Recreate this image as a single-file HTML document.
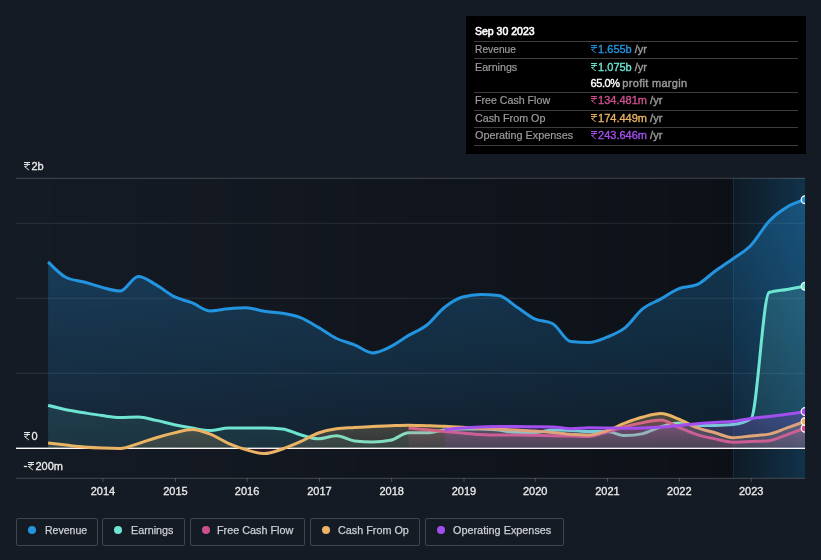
<!DOCTYPE html>
<html><head><meta charset="utf-8">
<style>
html,body{margin:0;padding:0;}
body{will-change:transform;width:821px;height:560px;overflow:hidden;background:#151b25;position:relative;font-family:"Liberation Sans",sans-serif;}
.tt{position:absolute;left:466px;top:16px;width:340px;height:138px;background:#000;}
.sep{position:absolute;left:8px;width:324px;height:1px;background:#3d3d3d;}
.t{position:absolute;font-size:11px;line-height:13px;white-space:nowrap;transform-origin:0 0;}
.lab{color:#9d9d9d;-webkit-text-stroke:0.2px #9d9d9d;}
.val{font-weight:normal;-webkit-text-stroke:0.35px currentColor;}
.yr{color:#9b9b9b;font-weight:normal;-webkit-text-stroke:0.4px #9b9b9b;}
.lg{position:absolute;top:518px;height:28px;border:1px solid #41464e;border-radius:2px;box-sizing:border-box;}
.lg .dot{position:absolute;left:11px;top:7px;width:8px;height:8px;border-radius:50%;}
.lg .tx{transform-origin:0 0;position:absolute;left:27.5px;top:5px;font-size:11px;line-height:13px;color:#cdd0d4;white-space:nowrap;-webkit-text-stroke:0.25px #cdd0d4;}
</style></head><body>
<svg width="821" height="560" viewBox="0 0 821 560" style="position:absolute;left:0;top:0">
<defs>
<linearGradient id="plotbg" x1="48" x2="805" y1="0" y2="0" gradientUnits="userSpaceOnUse">
 <stop offset="0" stop-color="#000" stop-opacity="0"/>
 <stop offset="0.9" stop-color="#000" stop-opacity="0.36"/>
 <stop offset="1" stop-color="#000" stop-opacity="0.4"/>
</linearGradient>
<linearGradient id="hl" x1="733" x2="805" y1="0" y2="0" gradientUnits="userSpaceOnUse">
 <stop offset="0" stop-color="#2394df" stop-opacity="0.07"/>
 <stop offset="1" stop-color="#2394df" stop-opacity="0.26"/>
</linearGradient>
<clipPath id="clip"><rect x="16" y="170" width="789" height="308.3"/></clipPath>
<clipPath id="pos"><rect x="16" y="170" width="789" height="278.3"/></clipPath>
<clipPath id="neg"><rect x="16" y="448.3" width="789" height="30.0"/></clipPath>
</defs>
<rect x="48" y="178" width="757" height="300" fill="url(#plotbg)"/>
<rect x="733" y="178" width="72" height="300" fill="url(#hl)"/>
<rect x="733" y="178" width="1" height="300" fill="#2394df" fill-opacity="0.16"/>
<rect x="16" y="177.8" width="789" height="1" fill="#ffffff" fill-opacity="0.2"/><rect x="16" y="222.8" width="789" height="1" fill="#ffffff" fill-opacity="0.1"/><rect x="16" y="297.8" width="789" height="1" fill="#ffffff" fill-opacity="0.1"/><rect x="16" y="372.8" width="789" height="1" fill="#ffffff" fill-opacity="0.1"/><rect x="16" y="477.8" width="789" height="1" fill="#ffffff" fill-opacity="0.2"/><rect x="102.4" y="478" width="1" height="4" fill="#ffffff" fill-opacity="0.2"/><rect x="174.9" y="478" width="1" height="4" fill="#ffffff" fill-opacity="0.2"/><rect x="246.6" y="478" width="1" height="4" fill="#ffffff" fill-opacity="0.2"/><rect x="318.9" y="478" width="1" height="4" fill="#ffffff" fill-opacity="0.2"/><rect x="391.2" y="478" width="1" height="4" fill="#ffffff" fill-opacity="0.2"/><rect x="463.5" y="478" width="1" height="4" fill="#ffffff" fill-opacity="0.2"/><rect x="534.7" y="478" width="1" height="4" fill="#ffffff" fill-opacity="0.2"/><rect x="607.0" y="478" width="1" height="4" fill="#ffffff" fill-opacity="0.2"/><rect x="678.8" y="478" width="1" height="4" fill="#ffffff" fill-opacity="0.2"/><rect x="750.7" y="478" width="1" height="4" fill="#ffffff" fill-opacity="0.2"/><rect x="16" y="447.6" width="789" height="1.4" fill="#ffffff"/><g clip-path="url(#clip)"><linearGradient id="g_rev" x1="0" x2="0" y1="0" y2="1"><stop offset="0" stop-color="#2394df" stop-opacity="0.34"/><stop offset="1" stop-color="#2394df" stop-opacity="0.09"/></linearGradient><path d="M48.10,261.90C54.11,268.20 60.12,274.50 66.12,277.50C72.13,280.50 78.14,280.35 84.15,282.00C90.16,283.65 96.16,285.90 102.17,287.40C108.18,288.90 114.19,291.00 120.20,291.00C126.20,291.00 132.21,276.40 138.22,276.40C144.23,276.40 150.24,281.52 156.24,284.90C162.25,288.28 168.26,293.70 174.27,296.70C180.28,299.70 186.28,300.52 192.29,302.90C198.30,305.28 204.31,311.00 210.32,311.00C216.32,311.00 222.33,309.33 228.34,308.80C234.35,308.27 240.36,307.80 246.36,307.80C252.37,307.80 258.38,310.38 264.39,311.30C270.40,312.22 276.40,312.25 282.41,313.30C288.42,314.35 294.43,315.25 300.44,317.60C306.44,319.95 312.45,323.92 318.46,327.40C324.47,330.88 330.48,335.60 336.48,338.50C342.49,341.40 348.50,342.40 354.51,344.80C360.52,347.20 366.52,352.90 372.53,352.90C378.54,352.90 384.55,349.62 390.56,346.70C396.56,343.78 402.57,338.97 408.58,335.40C414.59,331.83 420.60,330.00 426.60,325.30C432.61,320.60 438.62,311.92 444.63,307.20C450.64,302.48 456.64,298.73 462.65,297.00C468.66,295.27 474.67,294.40 480.68,294.40C486.68,294.40 492.69,294.77 498.70,295.50C504.71,296.23 510.72,303.00 516.72,306.90C522.73,310.80 528.74,316.10 534.75,318.90C540.76,321.70 546.76,320.50 552.77,323.70C558.78,326.90 564.79,340.90 570.80,341.50C576.80,342.10 582.81,342.40 588.82,342.40C594.83,342.40 600.84,339.62 606.84,337.20C612.85,334.78 618.86,332.65 624.87,327.90C630.88,323.15 636.88,313.53 642.89,308.70C648.90,303.87 654.91,302.25 660.92,298.90C666.92,295.55 672.93,290.97 678.94,288.60C684.95,286.23 690.96,287.30 696.96,284.70C702.97,282.10 708.98,275.52 714.99,271.20C721.00,266.88 727.00,263.13 733.01,258.80C739.02,254.47 745.03,251.45 751.04,245.20C757.04,238.95 763.05,227.67 769.06,221.30C775.07,214.93 781.08,210.60 787.08,207.00C793.09,203.40 799.10,201.55 805.11,199.70L805.11,448.3L48.10,448.3Z" fill="url(#g_rev)" clip-path="url(#pos)"/><path d="M48.10,261.90C54.11,268.20 60.12,274.50 66.12,277.50C72.13,280.50 78.14,280.35 84.15,282.00C90.16,283.65 96.16,285.90 102.17,287.40C108.18,288.90 114.19,291.00 120.20,291.00C126.20,291.00 132.21,276.40 138.22,276.40C144.23,276.40 150.24,281.52 156.24,284.90C162.25,288.28 168.26,293.70 174.27,296.70C180.28,299.70 186.28,300.52 192.29,302.90C198.30,305.28 204.31,311.00 210.32,311.00C216.32,311.00 222.33,309.33 228.34,308.80C234.35,308.27 240.36,307.80 246.36,307.80C252.37,307.80 258.38,310.38 264.39,311.30C270.40,312.22 276.40,312.25 282.41,313.30C288.42,314.35 294.43,315.25 300.44,317.60C306.44,319.95 312.45,323.92 318.46,327.40C324.47,330.88 330.48,335.60 336.48,338.50C342.49,341.40 348.50,342.40 354.51,344.80C360.52,347.20 366.52,352.90 372.53,352.90C378.54,352.90 384.55,349.62 390.56,346.70C396.56,343.78 402.57,338.97 408.58,335.40C414.59,331.83 420.60,330.00 426.60,325.30C432.61,320.60 438.62,311.92 444.63,307.20C450.64,302.48 456.64,298.73 462.65,297.00C468.66,295.27 474.67,294.40 480.68,294.40C486.68,294.40 492.69,294.77 498.70,295.50C504.71,296.23 510.72,303.00 516.72,306.90C522.73,310.80 528.74,316.10 534.75,318.90C540.76,321.70 546.76,320.50 552.77,323.70C558.78,326.90 564.79,340.90 570.80,341.50C576.80,342.10 582.81,342.40 588.82,342.40C594.83,342.40 600.84,339.62 606.84,337.20C612.85,334.78 618.86,332.65 624.87,327.90C630.88,323.15 636.88,313.53 642.89,308.70C648.90,303.87 654.91,302.25 660.92,298.90C666.92,295.55 672.93,290.97 678.94,288.60C684.95,286.23 690.96,287.30 696.96,284.70C702.97,282.10 708.98,275.52 714.99,271.20C721.00,266.88 727.00,263.13 733.01,258.80C739.02,254.47 745.03,251.45 751.04,245.20C757.04,238.95 763.05,227.67 769.06,221.30C775.07,214.93 781.08,210.60 787.08,207.00C793.09,203.40 799.10,201.55 805.11,199.70" fill="none" stroke="#2394df" stroke-width="3" stroke-linejoin="round" stroke-linecap="butt"/><linearGradient id="g_earn" x1="0" x2="0" y1="0" y2="1"><stop offset="0" stop-color="#6ee4d2" stop-opacity="0.16"/><stop offset="1" stop-color="#6ee4d2" stop-opacity="0.08"/></linearGradient><path d="M48.10,405.40C54.11,406.93 60.12,408.47 66.12,409.70C72.13,410.93 78.14,411.82 84.15,412.80C90.16,413.78 96.16,414.82 102.17,415.60C108.18,416.38 114.19,417.50 120.20,417.50C126.20,417.50 132.21,417.00 138.22,417.00C144.23,417.00 150.24,419.12 156.24,420.40C162.25,421.68 168.26,423.42 174.27,424.70C180.28,425.98 186.28,427.13 192.29,428.10C198.30,429.07 204.31,430.50 210.32,430.50C216.32,430.50 222.33,428.23 228.34,428.10C234.35,427.97 240.36,427.90 246.36,427.90C252.37,427.90 258.38,427.90 264.39,427.90C270.40,427.90 276.40,428.23 282.41,428.90C288.42,429.57 294.43,433.15 300.44,434.80C306.44,436.45 312.45,438.80 318.46,438.80C324.47,438.80 330.48,435.80 336.48,435.80C342.49,435.80 348.50,440.17 354.51,440.90C360.52,441.63 366.52,442.00 372.53,442.00C378.54,442.00 384.55,441.43 390.56,440.30C396.56,439.17 402.57,432.80 408.58,432.80C414.59,432.80 420.60,432.80 426.60,432.80C432.61,432.80 438.62,430.63 444.63,430.00C450.64,429.37 456.64,429.00 462.65,429.00C468.66,429.00 474.67,429.00 480.68,429.00C486.68,429.00 492.69,429.42 498.70,430.00C504.71,430.58 510.72,432.50 516.72,432.50C522.73,432.50 528.74,432.50 534.75,432.50C540.76,432.50 546.76,430.00 552.77,430.00C558.78,430.00 564.79,430.25 570.80,430.50C576.80,430.75 582.81,431.50 588.82,431.50C594.83,431.50 600.84,431.50 606.84,431.50C612.85,431.50 618.86,435.60 624.87,435.60C630.88,435.60 636.88,434.93 642.89,433.60C648.90,432.27 654.91,428.57 660.92,426.80C666.92,425.03 672.93,423.00 678.94,423.00C684.95,423.00 690.96,425.60 696.96,425.60C702.97,425.60 708.98,425.53 714.99,425.40C721.00,425.27 727.00,425.10 733.01,424.50C739.02,423.90 745.03,422.60 751.04,418.80C757.04,415.00 763.05,294.57 769.06,292.50C775.07,290.43 781.08,290.43 787.08,289.40C793.09,288.37 799.10,287.33 805.11,286.30L805.11,448.3L48.10,448.3Z" fill="url(#g_earn)" clip-path="url(#pos)"/><path d="M48.10,405.40C54.11,406.93 60.12,408.47 66.12,409.70C72.13,410.93 78.14,411.82 84.15,412.80C90.16,413.78 96.16,414.82 102.17,415.60C108.18,416.38 114.19,417.50 120.20,417.50C126.20,417.50 132.21,417.00 138.22,417.00C144.23,417.00 150.24,419.12 156.24,420.40C162.25,421.68 168.26,423.42 174.27,424.70C180.28,425.98 186.28,427.13 192.29,428.10C198.30,429.07 204.31,430.50 210.32,430.50C216.32,430.50 222.33,428.23 228.34,428.10C234.35,427.97 240.36,427.90 246.36,427.90C252.37,427.90 258.38,427.90 264.39,427.90C270.40,427.90 276.40,428.23 282.41,428.90C288.42,429.57 294.43,433.15 300.44,434.80C306.44,436.45 312.45,438.80 318.46,438.80C324.47,438.80 330.48,435.80 336.48,435.80C342.49,435.80 348.50,440.17 354.51,440.90C360.52,441.63 366.52,442.00 372.53,442.00C378.54,442.00 384.55,441.43 390.56,440.30C396.56,439.17 402.57,432.80 408.58,432.80C414.59,432.80 420.60,432.80 426.60,432.80C432.61,432.80 438.62,430.63 444.63,430.00C450.64,429.37 456.64,429.00 462.65,429.00C468.66,429.00 474.67,429.00 480.68,429.00C486.68,429.00 492.69,429.42 498.70,430.00C504.71,430.58 510.72,432.50 516.72,432.50C522.73,432.50 528.74,432.50 534.75,432.50C540.76,432.50 546.76,430.00 552.77,430.00C558.78,430.00 564.79,430.25 570.80,430.50C576.80,430.75 582.81,431.50 588.82,431.50C594.83,431.50 600.84,431.50 606.84,431.50C612.85,431.50 618.86,435.60 624.87,435.60C630.88,435.60 636.88,434.93 642.89,433.60C648.90,432.27 654.91,428.57 660.92,426.80C666.92,425.03 672.93,423.00 678.94,423.00C684.95,423.00 690.96,425.60 696.96,425.60C702.97,425.60 708.98,425.53 714.99,425.40C721.00,425.27 727.00,425.10 733.01,424.50C739.02,423.90 745.03,422.60 751.04,418.80C757.04,415.00 763.05,294.57 769.06,292.50C775.07,290.43 781.08,290.43 787.08,289.40C793.09,288.37 799.10,287.33 805.11,286.30" fill="none" stroke="#6ee4d2" stroke-width="3" stroke-linejoin="round" stroke-linecap="butt"/><linearGradient id="g_fcf" x1="0" x2="0" y1="0" y2="1"><stop offset="0" stop-color="#cc4f8e" stop-opacity="0.25"/><stop offset="1" stop-color="#cc4f8e" stop-opacity="0.09"/></linearGradient><path d="M408.58,427.90C414.59,428.50 420.60,429.10 426.60,429.70C432.61,430.30 438.62,430.93 444.63,431.50C450.64,432.07 456.64,432.60 462.65,433.10C468.66,433.60 474.67,434.18 480.68,434.50C486.68,434.82 492.69,435.00 498.70,435.00C504.71,435.00 510.72,435.00 516.72,435.00C522.73,435.00 528.74,435.18 534.75,435.30C540.76,435.42 546.76,435.57 552.77,435.70C558.78,435.83 564.79,435.97 570.80,436.10C576.80,436.23 582.81,436.50 588.82,436.50C594.83,436.50 600.84,433.63 606.84,432.00C612.85,430.37 618.86,428.27 624.87,426.70C630.88,425.13 636.88,423.73 642.89,422.60C648.90,421.47 654.91,419.90 660.92,419.90C666.92,419.90 672.93,425.05 678.94,427.50C684.95,429.95 690.96,432.70 696.96,434.60C702.97,436.50 708.98,437.63 714.99,438.90C721.00,440.17 727.00,442.20 733.01,442.20C739.02,442.20 745.03,441.75 751.04,441.50C757.04,441.25 763.05,441.23 769.06,440.70C775.07,440.17 781.08,436.68 787.08,434.60C793.09,432.52 799.10,430.36 805.11,428.20L805.11,448.3L408.58,448.3Z" fill="url(#g_fcf)" clip-path="url(#pos)"/><path d="M408.58,427.90C414.59,428.50 420.60,429.10 426.60,429.70C432.61,430.30 438.62,430.93 444.63,431.50C450.64,432.07 456.64,432.60 462.65,433.10C468.66,433.60 474.67,434.18 480.68,434.50C486.68,434.82 492.69,435.00 498.70,435.00C504.71,435.00 510.72,435.00 516.72,435.00C522.73,435.00 528.74,435.18 534.75,435.30C540.76,435.42 546.76,435.57 552.77,435.70C558.78,435.83 564.79,435.97 570.80,436.10C576.80,436.23 582.81,436.50 588.82,436.50C594.83,436.50 600.84,433.63 606.84,432.00C612.85,430.37 618.86,428.27 624.87,426.70C630.88,425.13 636.88,423.73 642.89,422.60C648.90,421.47 654.91,419.90 660.92,419.90C666.92,419.90 672.93,425.05 678.94,427.50C684.95,429.95 690.96,432.70 696.96,434.60C702.97,436.50 708.98,437.63 714.99,438.90C721.00,440.17 727.00,442.20 733.01,442.20C739.02,442.20 745.03,441.75 751.04,441.50C757.04,441.25 763.05,441.23 769.06,440.70C775.07,440.17 781.08,436.68 787.08,434.60C793.09,432.52 799.10,430.36 805.11,428.20" fill="none" stroke="#cc4f8e" stroke-width="3" stroke-linejoin="round" stroke-linecap="butt"/><linearGradient id="g_cfo" x1="0" x2="0" y1="0" y2="1"><stop offset="0" stop-color="#ebb464" stop-opacity="0.28"/><stop offset="1" stop-color="#ebb464" stop-opacity="0.1"/></linearGradient><path d="M48.10,443.10C54.11,443.78 60.12,444.45 66.12,445.10C72.13,445.75 78.14,446.50 84.15,447.00C90.16,447.50 96.16,447.85 102.17,448.10C108.18,448.35 114.19,448.50 120.20,448.50C126.20,448.50 132.21,445.40 138.22,443.60C144.23,441.80 150.24,439.48 156.24,437.70C162.25,435.92 168.26,434.27 174.27,432.90C180.28,431.53 186.28,429.50 192.29,429.50C198.30,429.50 204.31,431.90 210.32,434.20C216.32,436.50 222.33,440.70 228.34,443.30C234.35,445.90 240.36,448.08 246.36,449.80C252.37,451.52 258.38,453.60 264.39,453.60C270.40,453.60 276.40,450.98 282.41,449.00C288.42,447.02 294.43,444.37 300.44,441.70C306.44,439.03 312.45,435.15 318.46,433.00C324.47,430.85 330.48,429.67 336.48,428.80C342.49,427.93 348.50,427.90 354.51,427.50C360.52,427.10 366.52,426.70 372.53,426.40C378.54,426.10 384.55,425.90 390.56,425.70C396.56,425.50 402.57,425.20 408.58,425.20C414.59,425.20 420.60,425.52 426.60,425.70C432.61,425.88 438.62,426.03 444.63,426.30C450.64,426.57 456.64,426.93 462.65,427.30C468.66,427.67 474.67,428.17 480.68,428.50C486.68,428.83 492.69,429.03 498.70,429.30C504.71,429.57 510.72,429.80 516.72,430.10C522.73,430.40 528.74,430.68 534.75,431.10C540.76,431.52 546.76,432.07 552.77,432.60C558.78,433.13 564.79,433.92 570.80,434.30C576.80,434.68 582.81,434.90 588.82,434.90C594.83,434.90 600.84,432.67 606.84,430.70C612.85,428.73 618.86,425.38 624.87,423.10C630.88,420.82 636.88,418.60 642.89,417.00C648.90,415.40 654.91,413.50 660.92,413.50C666.92,413.50 672.93,416.73 678.94,419.10C684.95,421.47 690.96,425.42 696.96,427.70C702.97,429.98 708.98,431.13 714.99,432.80C721.00,434.47 727.00,437.70 733.01,437.70C739.02,437.70 745.03,436.50 751.04,435.90C757.04,435.30 763.05,435.30 769.06,434.10C775.07,432.90 781.08,430.00 787.08,427.90C793.09,425.80 799.10,423.65 805.11,421.50L805.11,448.3L48.10,448.3Z" fill="url(#g_cfo)" clip-path="url(#pos)"/><path d="M48.10,443.10C54.11,443.78 60.12,444.45 66.12,445.10C72.13,445.75 78.14,446.50 84.15,447.00C90.16,447.50 96.16,447.85 102.17,448.10C108.18,448.35 114.19,448.50 120.20,448.50C126.20,448.50 132.21,445.40 138.22,443.60C144.23,441.80 150.24,439.48 156.24,437.70C162.25,435.92 168.26,434.27 174.27,432.90C180.28,431.53 186.28,429.50 192.29,429.50C198.30,429.50 204.31,431.90 210.32,434.20C216.32,436.50 222.33,440.70 228.34,443.30C234.35,445.90 240.36,448.08 246.36,449.80C252.37,451.52 258.38,453.60 264.39,453.60C270.40,453.60 276.40,450.98 282.41,449.00C288.42,447.02 294.43,444.37 300.44,441.70C306.44,439.03 312.45,435.15 318.46,433.00C324.47,430.85 330.48,429.67 336.48,428.80C342.49,427.93 348.50,427.90 354.51,427.50C360.52,427.10 366.52,426.70 372.53,426.40C378.54,426.10 384.55,425.90 390.56,425.70C396.56,425.50 402.57,425.20 408.58,425.20C414.59,425.20 420.60,425.52 426.60,425.70C432.61,425.88 438.62,426.03 444.63,426.30C450.64,426.57 456.64,426.93 462.65,427.30C468.66,427.67 474.67,428.17 480.68,428.50C486.68,428.83 492.69,429.03 498.70,429.30C504.71,429.57 510.72,429.80 516.72,430.10C522.73,430.40 528.74,430.68 534.75,431.10C540.76,431.52 546.76,432.07 552.77,432.60C558.78,433.13 564.79,433.92 570.80,434.30C576.80,434.68 582.81,434.90 588.82,434.90C594.83,434.90 600.84,432.67 606.84,430.70C612.85,428.73 618.86,425.38 624.87,423.10C630.88,420.82 636.88,418.60 642.89,417.00C648.90,415.40 654.91,413.50 660.92,413.50C666.92,413.50 672.93,416.73 678.94,419.10C684.95,421.47 690.96,425.42 696.96,427.70C702.97,429.98 708.98,431.13 714.99,432.80C721.00,434.47 727.00,437.70 733.01,437.70C739.02,437.70 745.03,436.50 751.04,435.90C757.04,435.30 763.05,435.30 769.06,434.10C775.07,432.90 781.08,430.00 787.08,427.90C793.09,425.80 799.10,423.65 805.11,421.50L805.11,448.3L48.10,448.3Z" fill="#ff2060" fill-opacity="0.1" clip-path="url(#neg)"/><path d="M48.10,443.10C54.11,443.78 60.12,444.45 66.12,445.10C72.13,445.75 78.14,446.50 84.15,447.00C90.16,447.50 96.16,447.85 102.17,448.10C108.18,448.35 114.19,448.50 120.20,448.50C126.20,448.50 132.21,445.40 138.22,443.60C144.23,441.80 150.24,439.48 156.24,437.70C162.25,435.92 168.26,434.27 174.27,432.90C180.28,431.53 186.28,429.50 192.29,429.50C198.30,429.50 204.31,431.90 210.32,434.20C216.32,436.50 222.33,440.70 228.34,443.30C234.35,445.90 240.36,448.08 246.36,449.80C252.37,451.52 258.38,453.60 264.39,453.60C270.40,453.60 276.40,450.98 282.41,449.00C288.42,447.02 294.43,444.37 300.44,441.70C306.44,439.03 312.45,435.15 318.46,433.00C324.47,430.85 330.48,429.67 336.48,428.80C342.49,427.93 348.50,427.90 354.51,427.50C360.52,427.10 366.52,426.70 372.53,426.40C378.54,426.10 384.55,425.90 390.56,425.70C396.56,425.50 402.57,425.20 408.58,425.20C414.59,425.20 420.60,425.52 426.60,425.70C432.61,425.88 438.62,426.03 444.63,426.30C450.64,426.57 456.64,426.93 462.65,427.30C468.66,427.67 474.67,428.17 480.68,428.50C486.68,428.83 492.69,429.03 498.70,429.30C504.71,429.57 510.72,429.80 516.72,430.10C522.73,430.40 528.74,430.68 534.75,431.10C540.76,431.52 546.76,432.07 552.77,432.60C558.78,433.13 564.79,433.92 570.80,434.30C576.80,434.68 582.81,434.90 588.82,434.90C594.83,434.90 600.84,432.67 606.84,430.70C612.85,428.73 618.86,425.38 624.87,423.10C630.88,420.82 636.88,418.60 642.89,417.00C648.90,415.40 654.91,413.50 660.92,413.50C666.92,413.50 672.93,416.73 678.94,419.10C684.95,421.47 690.96,425.42 696.96,427.70C702.97,429.98 708.98,431.13 714.99,432.80C721.00,434.47 727.00,437.70 733.01,437.70C739.02,437.70 745.03,436.50 751.04,435.90C757.04,435.30 763.05,435.30 769.06,434.10C775.07,432.90 781.08,430.00 787.08,427.90C793.09,425.80 799.10,423.65 805.11,421.50" fill="none" stroke="#ebb464" stroke-width="3" stroke-linejoin="round" stroke-linecap="butt"/><linearGradient id="g_opex" x1="0" x2="0" y1="0" y2="1"><stop offset="0" stop-color="#a34ff0" stop-opacity="0.25"/><stop offset="1" stop-color="#a34ff0" stop-opacity="0.09"/></linearGradient><path d="M444.63,429.60C450.64,428.97 456.64,428.33 462.65,427.90C468.66,427.47 474.67,427.22 480.68,427.00C486.68,426.78 492.69,426.60 498.70,426.60C504.71,426.60 510.72,426.60 516.72,426.60C522.73,426.60 528.74,426.73 534.75,426.80C540.76,426.87 546.76,426.87 552.77,427.00C558.78,427.13 564.79,428.70 570.80,428.70C576.80,428.70 582.81,427.70 588.82,427.70C594.83,427.70 600.84,427.80 606.84,427.90C612.85,428.00 618.86,428.30 624.87,428.30C630.88,428.30 636.88,428.20 642.89,428.00C648.90,427.80 654.91,427.53 660.92,427.10C666.92,426.67 672.93,425.97 678.94,425.40C684.95,424.83 690.96,424.20 696.96,423.70C702.97,423.20 708.98,422.77 714.99,422.40C721.00,422.03 727.00,422.10 733.01,421.50C739.02,420.90 745.03,419.35 751.04,418.50C757.04,417.65 763.05,417.10 769.06,416.40C775.07,415.70 781.08,415.12 787.08,414.30C793.09,413.48 799.10,412.49 805.11,411.50L805.11,448.3L444.63,448.3Z" fill="url(#g_opex)" clip-path="url(#pos)"/><path d="M444.63,429.60C450.64,428.97 456.64,428.33 462.65,427.90C468.66,427.47 474.67,427.22 480.68,427.00C486.68,426.78 492.69,426.60 498.70,426.60C504.71,426.60 510.72,426.60 516.72,426.60C522.73,426.60 528.74,426.73 534.75,426.80C540.76,426.87 546.76,426.87 552.77,427.00C558.78,427.13 564.79,428.70 570.80,428.70C576.80,428.70 582.81,427.70 588.82,427.70C594.83,427.70 600.84,427.80 606.84,427.90C612.85,428.00 618.86,428.30 624.87,428.30C630.88,428.30 636.88,428.20 642.89,428.00C648.90,427.80 654.91,427.53 660.92,427.10C666.92,426.67 672.93,425.97 678.94,425.40C684.95,424.83 690.96,424.20 696.96,423.70C702.97,423.20 708.98,422.77 714.99,422.40C721.00,422.03 727.00,422.10 733.01,421.50C739.02,420.90 745.03,419.35 751.04,418.50C757.04,417.65 763.05,417.10 769.06,416.40C775.07,415.70 781.08,415.12 787.08,414.30C793.09,413.48 799.10,412.49 805.11,411.50" fill="none" stroke="#a34ff0" stroke-width="3" stroke-linejoin="round" stroke-linecap="butt"/><circle cx="805.1080000000001" cy="199.7" r="3.9" fill="#2394df" stroke="#fff" stroke-width="1.2"/><circle cx="805.1080000000001" cy="286.3" r="3.9" fill="#6ee4d2" stroke="#fff" stroke-width="1.2"/><circle cx="805.1080000000001" cy="428.2" r="3.9" fill="#cc4f8e" stroke="#fff" stroke-width="1.2"/><circle cx="805.1080000000001" cy="421.5" r="3.9" fill="#ebb464" stroke="#fff" stroke-width="1.2"/><circle cx="805.1080000000001" cy="411.5" r="3.9" fill="#a34ff0" stroke="#fff" stroke-width="1.2"/></g><g font-family="Liberation Sans" font-size="11" fill="#ebebeb" stroke="#ebebeb" stroke-width="0.3"><g transform="translate(24,162) scale(1)"><path d="M0,0.5H6M0,2.5H6M1.2,0.5C5,0.5 5.1,4.5 0.5,4.5L4.9,8" fill="none" stroke="#e6e6e6" stroke-width="1.0"/></g><text x="31.5" y="170.4">2b</text><g transform="translate(24,432) scale(1)"><path d="M0,0.5H6M0,2.5H6M1.2,0.5C5,0.5 5.1,4.5 0.5,4.5L4.9,8" fill="none" stroke="#e6e6e6" stroke-width="1.0"/></g><text x="31.5" y="440.4">0</text><rect x="24" y="466" width="3" height="1" fill="#e6e6e6"/><g transform="translate(28,462) scale(1)"><path d="M0,0.5H6M0,2.5H6M1.2,0.5C5,0.5 5.1,4.5 0.5,4.5L4.9,8" fill="none" stroke="#e6e6e6" stroke-width="1.0"/></g><text x="35.5" y="470.4">200m</text><text x="102.9" y="495" text-anchor="middle">2014</text><text x="175.4" y="495" text-anchor="middle">2015</text><text x="247.1" y="495" text-anchor="middle">2016</text><text x="319.4" y="495" text-anchor="middle">2017</text><text x="391.7" y="495" text-anchor="middle">2018</text><text x="464" y="495" text-anchor="middle">2019</text><text x="535.2" y="495" text-anchor="middle">2020</text><text x="607.5" y="495" text-anchor="middle">2021</text><text x="679.3" y="495" text-anchor="middle">2022</text><text x="751.2" y="495" text-anchor="middle">2023</text></g></svg>
<div class="tt">
 <div class="t" style="left:8.5px;top:9px;color:#fff;-webkit-text-stroke:0.6px #fff;transform:scaleX(0.955)">Sep 30 2023</div>
 <div class="sep" style="top:25px"></div>
 <div class="t lab" style="left:8.5px;top:27.3px;transform:scaleX(0.93)">Revenue</div>
 <div class="t val" style="left:124.5px;top:27.3px;color:#2394df"><svg class="rp" width="6" height="8" viewBox="0 0 6 8" style="display:inline-block;vertical-align:0px;margin-right:1.6px"><path d="M0,0.5H6M0,2.5H6M1.2,0.5C5,0.5 5.1,4.5 0.5,4.5L4.9,8" fill="none" stroke="#2394df" stroke-width="0.95" stroke-linecap="butt"/></svg>1.655b <span class="yr">/yr</span></div>
 <div class="sep" style="top:42px"></div>
 <div class="t lab" style="left:8.5px;top:44.5px;transform:scaleX(0.972)">Earnings</div>
 <div class="t val" style="left:124.5px;top:44.5px;color:#6ee4d2"><svg class="rp" width="6" height="8" viewBox="0 0 6 8" style="display:inline-block;vertical-align:0px;margin-right:1.6px"><path d="M0,0.5H6M0,2.5H6M1.2,0.5C5,0.5 5.1,4.5 0.5,4.5L4.9,8" fill="none" stroke="#6ee4d2" stroke-width="0.95" stroke-linecap="butt"/></svg>1.075b <span class="yr">/yr</span></div>
 <div class="t val" style="left:124.5px;top:61px;color:#fff;letter-spacing:-0.4px">65.0% <span class="yr" style="letter-spacing:0.3px">profit margin</span></div>
 <div class="sep" style="top:76px"></div>
 <div class="t lab" style="left:8.5px;top:78.2px;transform:scaleX(0.967)">Free Cash Flow</div>
 <div class="t val" style="left:124.5px;top:78.2px;color:#cc4f8e"><svg class="rp" width="6" height="8" viewBox="0 0 6 8" style="display:inline-block;vertical-align:0px;margin-right:1.6px"><path d="M0,0.5H6M0,2.5H6M1.2,0.5C5,0.5 5.1,4.5 0.5,4.5L4.9,8" fill="none" stroke="#cc4f8e" stroke-width="0.95" stroke-linecap="butt"/></svg>134.481m <span class="yr">/yr</span></div>
 <div class="sep" style="top:94px"></div>
 <div class="t lab" style="left:8.5px;top:96px;transform:scaleX(0.976)">Cash From Op</div>
 <div class="t val" style="left:124.5px;top:96px;color:#ebb464"><svg class="rp" width="6" height="8" viewBox="0 0 6 8" style="display:inline-block;vertical-align:0px;margin-right:1.6px"><path d="M0,0.5H6M0,2.5H6M1.2,0.5C5,0.5 5.1,4.5 0.5,4.5L4.9,8" fill="none" stroke="#ebb464" stroke-width="0.95" stroke-linecap="butt"/></svg>174.449m <span class="yr">/yr</span></div>
 <div class="sep" style="top:111px"></div>
 <div class="t lab" style="left:8.5px;top:113.3px;transform:scaleX(0.984)">Operating Expenses</div>
 <div class="t val" style="left:124.5px;top:113.3px;color:#a34ff0"><svg class="rp" width="6" height="8" viewBox="0 0 6 8" style="display:inline-block;vertical-align:0px;margin-right:1.6px"><path d="M0,0.5H6M0,2.5H6M1.2,0.5C5,0.5 5.1,4.5 0.5,4.5L4.9,8" fill="none" stroke="#a34ff0" stroke-width="0.95" stroke-linecap="butt"/></svg>243.646m <span class="yr">/yr</span></div>
 <div class="sep" style="top:129px"></div>
</div>
<div class="lg" style="left:16px;width:82px"><div class="dot" style="background:#2394df"></div><div class="tx" style="transform:scaleX(0.958)">Revenue</div></div>
<div class="lg" style="left:102px;width:83px"><div class="dot" style="background:#6ee4d2"></div><div class="tx" style="transform:scaleX(0.977)">Earnings</div></div>
<div class="lg" style="left:189.5px;width:115.5px"><div class="dot" style="background:#cc4f8e"></div><div class="tx" style="left:26px;transform:scaleX(0.983)">Free Cash Flow</div></div>
<div class="lg" style="left:309.5px;width:110px"><div class="dot" style="background:#ebb464"></div><div class="tx" style="transform:scaleX(0.982)">Cash From Op</div></div>
<div class="lg" style="left:424.5px;width:139px"><div class="dot" style="background:#a34ff0"></div><div class="tx" style="transform:scaleX(0.986)">Operating Expenses</div></div>
</body></html>
